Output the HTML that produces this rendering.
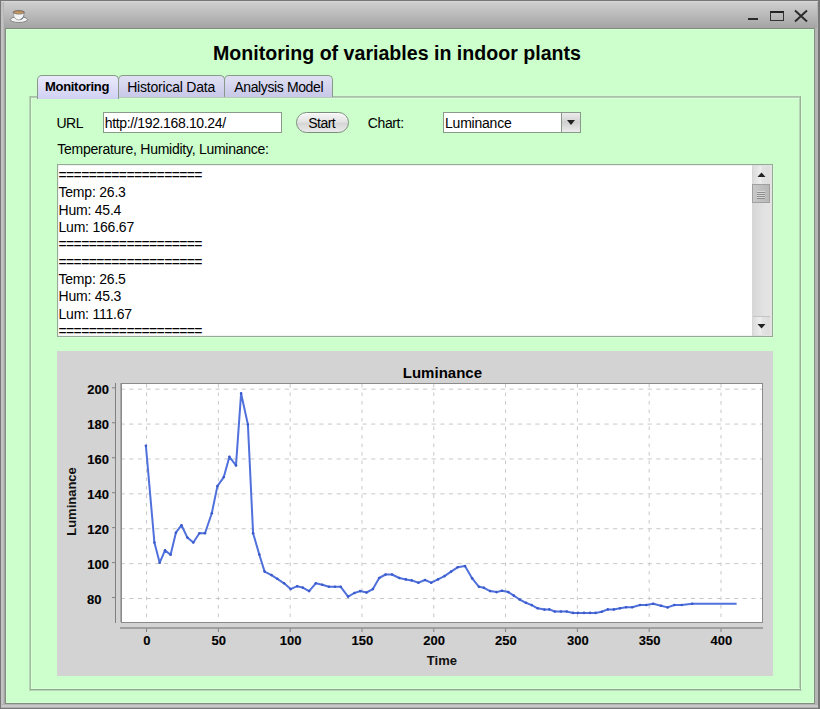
<!DOCTYPE html>
<html><head><meta charset="utf-8">
<style>
html,body{margin:0;padding:0;}
body{width:820px;height:709px;position:relative;overflow:hidden;background:#777;font-family:"Liberation Sans",sans-serif;}
.a{position:absolute;}
.t{position:absolute;white-space:pre;font-size:13.33px;color:#000;line-height:1;}
</style></head><body>
<!-- frame -->
<div class="a" style="left:1px;top:1px;width:818px;height:707px;background:#b4b4b4;"></div>
<div class="a" style="left:1px;top:1px;width:3px;height:707px;background:linear-gradient(90deg,#bdbdbd,#c8c8c8 40%,#b0b0b0);"></div>
<div class="a" style="left:4px;top:1px;width:1px;height:707px;background:#a5a5a5;"></div>
<div class="a" style="left:818px;top:1px;width:1px;height:707px;background:#777;"></div>
<div class="a" style="left:1px;top:704px;width:817px;height:4px;background:linear-gradient(180deg,#a8a8a8,#c8c8c8 30%,#c8c8c8 70%,#a0a0a0);"></div>
<!-- title bar -->
<div class="a" style="left:4px;top:1px;width:813px;height:27px;background:linear-gradient(180deg,#d6d6d6 0,#cdcdcd 2px,#a4a4a4 27px);"></div><div class="a" style="left:1px;top:1px;width:817px;height:1px;background:#d6d6d6;"></div>
<!-- coffee cup icon -->
<svg class="a" style="left:9px;top:9px" width="20" height="16" viewBox="0 0 20 16">
  <ellipse cx="9.9" cy="10.6" rx="8.6" ry="2.9" fill="#f2f2f2" stroke="#7a7a7a" stroke-width="0.9"/>
  <path d="M4.2 3.4 Q4.4 8.8 7.2 10.4 Q9.8 11.6 12.6 10.4 Q15.2 8.6 15.4 3.4 Z" fill="#f4f4f4" stroke="#8a8a8a" stroke-width="0.7"/>
  <path d="M10.5 10.6 Q13.5 9.8 14.6 6.8 L15.3 3.8 Q15.4 8.8 12.8 10.6 Z" fill="#6a7482"/>
  <ellipse cx="9.8" cy="3.3" rx="5.6" ry="1.8" fill="#a87e50" stroke="#666" stroke-width="0.7"/>
  <ellipse cx="9.8" cy="3.6" rx="4.4" ry="1.1" fill="#c29a6a"/>
</svg>
<!-- window buttons -->
<div class="a" style="left:748px;top:18px;width:10px;height:2px;background:#2a2a2a;"></div>
<div class="a" style="left:770px;top:11px;width:12px;height:7px;border:1.3px solid #333;border-top:2px solid #222;"></div>
<svg class="a" style="left:793px;top:9px" width="16" height="14" viewBox="0 0 16 14">
  <path d="M2 1.5 L14 12.5 M14 1.5 L2 12.5" stroke="#2a2a2a" stroke-width="1.9" fill="none"/>
</svg>
<!-- content -->
<div class="a" style="left:5px;top:28px;width:808px;height:674px;border:1px solid #7f907f;background:#ccffcc;box-shadow:inset 0 0 0 1px #d6fed6;"></div>

<div class="t" style="left:213px;top:43.5px;font-size:19.6px;font-weight:bold;">Monitoring of variables in indoor plants</div>

<!-- tab panel etched border -->
<div class="a" style="left:29px;top:95px;width:773px;height:1px;background:#d4fcd4;"></div>
<div class="a" style="left:29px;top:96px;width:773px;height:1px;background:#a8c4a8;"></div>
<div class="a" style="left:30px;top:97px;width:771px;height:1px;background:#b4ccb4;"></div>
<div class="a" style="left:31px;top:98px;width:769px;height:1px;background:#d8ffd8;"></div>
<div class="a" style="left:29px;top:96px;width:1px;height:595px;background:#b8d4b8;"></div>
<div class="a" style="left:30px;top:96px;width:1px;height:594px;background:#9cc09c;"></div>
<div class="a" style="left:31px;top:98px;width:1px;height:591px;background:#d8ffd8;"></div>
<div class="a" style="left:799px;top:97px;width:1px;height:593px;background:#b8d4b8;"></div>
<div class="a" style="left:800px;top:96px;width:1px;height:594px;background:#94b494;"></div>
<div class="a" style="left:801px;top:96px;width:1px;height:595px;background:#d8ffd8;"></div>
<div class="a" style="left:31px;top:688px;width:769px;height:1px;background:#d8ffd8;"></div>
<div class="a" style="left:30px;top:689px;width:771px;height:1px;background:#8cac8c;"></div>
<div class="a" style="left:29px;top:690px;width:773px;height:1px;background:#b8d4b8;"></div>
<!-- tabs -->
<div class="a" style="left:118px;top:75px;width:105px;height:21px;border:1px solid #8a9a8a;border-bottom:none;border-radius:5px 5px 0 0;background:linear-gradient(180deg,#e0e0f4,#c8c8e8);"></div>
<div class="a" style="left:224px;top:75px;width:107px;height:21px;border:1px solid #8a9a8a;border-bottom:none;border-radius:5px 5px 0 0;background:linear-gradient(180deg,#e0e0f4,#c8c8e8);"></div>
<div class="a" style="left:37px;top:75px;width:80px;height:23px;border:1px solid #8a9a8a;border-bottom:none;border-radius:5px 5px 0 0;background:linear-gradient(180deg,#eaeafc,#d0d0f4);"></div>
<div class="t" style="left:45px;top:80px;font-size:13px;font-weight:bold;letter-spacing:-0.3px;">Monitoring</div>
<div class="t" style="left:127.2px;top:80px;font-size:14px;letter-spacing:-0.21px;">Historical Data</div>
<div class="t" style="left:234.3px;top:80px;font-size:14px;letter-spacing:-0.38px;">Analysis Model</div>

<!-- row 1 -->
<div class="t" style="left:56.5px;top:116px;font-size:14px;letter-spacing:-0.5px;">URL</div>
<div class="a" style="left:103px;top:112px;width:177px;height:19px;border:1px solid #8a9a8a;background:#fff;"></div>
<div class="t" style="left:104.8px;top:116px;font-size:14px;letter-spacing:-0.36px;">http://192.168.10.24/</div>
<div class="a" style="left:296px;top:112px;width:51px;height:19px;border:1px solid #7c8c7c;border-radius:11px;background:linear-gradient(180deg,#f6f6f6,#e4e4e4 45%,#d6d6d6 55%,#eaeaea);box-shadow:inset 0 1px 0 #fff;"></div>
<div class="t" style="left:308.2px;top:116px;font-size:14px;letter-spacing:-0.5px;">Start</div>
<div class="t" style="left:367.8px;top:116px;font-size:14px;letter-spacing:-0.38px;">Chart:</div>
<div class="a" style="left:443px;top:112px;width:136px;height:19px;border:1px solid #8a9a8a;background:#fff;"></div>
<div class="a" style="left:561px;top:113px;width:18px;height:19px;border-left:1px solid #8a9a8a;background:linear-gradient(180deg,#ececec,#d0d0d0 50%,#ececec);"></div>
<svg class="a" style="left:566px;top:119px" width="10" height="7"><path d="M1 1 L9 1 L5 6 Z" fill="#222"/></svg>
<div class="t" style="left:445px;top:116px;font-size:14px;letter-spacing:-0.22px;">Luminance</div>

<div class="t" style="left:57.3px;top:142px;font-size:14px;letter-spacing:-0.26px;">Temperature, Humidity, Luminance:</div>

<!-- text area -->
<div class="a" style="left:57px;top:164px;width:714px;height:171px;border:1px solid #94aa94;background:#fff;box-shadow:inset 0 0 2px rgba(0,0,0,.18), 1px 1px 0 #d8ffd8;"></div>
<div class="t" style="left:58.5px;top:167px;line-height:17.33px;font-size:14px;letter-spacing:-0.21px;"><span style="letter-spacing:-0.63px">===================</span>
Temp: 26.3
Hum: 45.4
Lum: 166.67
<span style="letter-spacing:-0.63px">===================</span>
<span style="letter-spacing:-0.63px">===================</span>
Temp: 26.5
Hum: 45.3
Lum: 111.67
<span style="letter-spacing:-0.63px">===================</span></div>
<!-- scrollbar -->
<div class="a" style="left:752px;top:165px;width:20px;height:171px;background:linear-gradient(90deg,#d6d6d6,#e2e2e2 60%,#e4e4e4);"></div>
<div class="a" style="left:753px;top:166px;width:17px;height:18px;background:linear-gradient(90deg,#dcdcdc,#ededed 45%,#e2e2e2 55%,#dddddd);"></div>
<svg class="a" style="left:756px;top:170.5px" width="11" height="7"><path d="M1.5 6 L9.5 6 L5.5 1.5 Z" fill="#222"/></svg>
<div class="a" style="left:752px;top:184px;width:16px;height:17px;border:1px solid #a0a0a0;background:linear-gradient(90deg,#c8c8c8,#b8b8b8);"></div>
<div class="a" style="left:757px;top:191px;width:8px;height:1px;background:#d8d8d8;box-shadow:0 1px 0 #8c8c8c,0 2px 0 #d8d8d8,0 3px 0 #8c8c8c,0 4px 0 #d8d8d8,0 5px 0 #8c8c8c,0 6px 0 #d8d8d8,0 7px 0 #8c8c8c;"></div>
<div class="a" style="left:753px;top:316px;width:17px;height:18px;border-top:1px solid #c4c4c4;background:linear-gradient(90deg,#dcdcdc,#ededed 45%,#e2e2e2 55%,#dddddd);"></div>
<svg class="a" style="left:756px;top:323px" width="11" height="7"><path d="M1.5 1 L9.5 1 L5.5 5.5 Z" fill="#222"/></svg>

<!-- chart -->
<div class="a" style="left:57px;top:351px;width:716px;height:325px;background:#d3d3d3;"></div>
<svg class="a" style="left:0;top:0" width="820" height="709" viewBox="0 0 820 709">
  <rect x="121.5" y="383.5" width="641" height="239" fill="#fff" stroke="#8a8a8a" stroke-width="1"/>
  <rect x="120" y="383" width="1" height="239" fill="#a8a8a8"/>
  <g stroke="#c8c8c8" stroke-width="1">
<line x1="146.55" y1="384" x2="146.55" y2="622" stroke-dasharray="3.6 4.9" />
<line x1="218.36" y1="384" x2="218.36" y2="622" stroke-dasharray="3.6 4.9" />
<line x1="290.16" y1="384" x2="290.16" y2="622" stroke-dasharray="3.6 4.9" />
<line x1="361.97" y1="384" x2="361.97" y2="622" stroke-dasharray="3.6 4.9" />
<line x1="433.77" y1="384" x2="433.77" y2="622" stroke-dasharray="3.6 4.9" />
<line x1="505.57" y1="384" x2="505.57" y2="622" stroke-dasharray="3.6 4.9" />
<line x1="577.38" y1="384" x2="577.38" y2="622" stroke-dasharray="3.6 4.9" />
<line x1="649.18" y1="384" x2="649.18" y2="622" stroke-dasharray="3.6 4.9" />
<line x1="720.99" y1="384" x2="720.99" y2="622" stroke-dasharray="3.6 4.9" />
<line x1="122" y1="598.52" x2="762" y2="598.52" stroke-dasharray="4.2 4.44" stroke-dashoffset="1.4" />
<line x1="122" y1="563.63" x2="762" y2="563.63" stroke-dasharray="4.2 4.44" stroke-dashoffset="1.4" />
<line x1="122" y1="528.74" x2="762" y2="528.74" stroke-dasharray="4.2 4.44" stroke-dashoffset="1.4" />
<line x1="122" y1="493.85" x2="762" y2="493.85" stroke-dasharray="4.2 4.44" stroke-dashoffset="1.4" />
<line x1="122" y1="458.96" x2="762" y2="458.96" stroke-dasharray="4.2 4.44" stroke-dashoffset="1.4" />
<line x1="122" y1="424.07" x2="762" y2="424.07" stroke-dasharray="4.2 4.44" stroke-dashoffset="1.4" />
<line x1="122" y1="389.18" x2="762" y2="389.18" stroke-dasharray="4.2 4.44" stroke-dashoffset="1.4" />
  </g>
  <rect x="115" y="383" width="1" height="240" fill="#808080"/>
  <rect x="120" y="627" width="643" height="2" fill="#a0a0a0"/>
  <g stroke="#808080" stroke-width="1">
<line x1="146.55" y1="628.5" x2="146.55" y2="632" /><line x1="218.36" y1="628.5" x2="218.36" y2="632" /><line x1="290.16" y1="628.5" x2="290.16" y2="632" /><line x1="361.97" y1="628.5" x2="361.97" y2="632" /><line x1="433.77" y1="628.5" x2="433.77" y2="632" /><line x1="505.57" y1="628.5" x2="505.57" y2="632" /><line x1="577.38" y1="628.5" x2="577.38" y2="632" /><line x1="649.18" y1="628.5" x2="649.18" y2="632" /><line x1="720.99" y1="628.5" x2="720.99" y2="632" />
<line x1="112" y1="597.56" x2="115" y2="597.56" /><line x1="112" y1="562.6" x2="115" y2="562.6" /><line x1="112" y1="527.64" x2="115" y2="527.64" /><line x1="112" y1="492.68" x2="115" y2="492.68" /><line x1="112" y1="457.72" x2="115" y2="457.72" /><line x1="112" y1="422.76" x2="115" y2="422.76" /><line x1="112" y1="387.8" x2="115" y2="387.8" />
  </g>
  <polyline points="145.9,445.8 154.4,542.5 159.7,562.7 165.0,550.4 170.6,554.8 175.9,532.7 181.5,525.2 187.4,537.6 193.3,542.5 199.4,533.3 205.0,533.3 211.8,513.2 217.4,486.1 223.8,477.1 229.4,456.8 236.0,465.4 241.1,393.4 247.9,424.5 253.1,533.3 259.3,554.5 264.6,571.6 271.5,575.1 277.3,578.8 284.1,583.3 290.6,589.1 297.2,586.2 302.7,587.6 309.1,591.1 315.8,583.3 322.2,584.7 329.0,586.8 334.9,586.8 340.7,586.8 348.1,596.6 354.4,593.0 360.2,591.1 366.5,592.5 372.9,589.1 379.2,578.0 385.6,574.5 392.0,574.5 399.3,578.0 405.9,579.4 411.7,580.4 418.5,582.7 425.0,580.0 431.2,582.7 438.0,579.4 444.5,576.1 451.1,571.6 457.6,567.3 465.0,566.1 472.2,578.4 479.0,586.8 483.9,587.8 490.1,591.1 496.6,592.1 501.9,590.7 508.3,592.1 513.8,595.6 519.6,599.5 525.9,602.8 531.7,605.1 537.6,608.3 544.4,609.6 549.3,609.4 554.8,611.5 560.9,611.5 566.7,611.5 573.0,612.9 577.9,612.9 584.0,612.9 590.1,612.9 595.6,612.9 601.7,611.8 607.8,609.4 613.9,609.4 620.0,608.2 626.1,607.2 632.2,607.2 640.1,605.0 646.3,605.0 653.2,603.8 661.0,605.7 667.6,607.4 674.4,605.0 681.7,605.0 692.2,603.8 736.6,603.8" fill="none" stroke="#5070dc" stroke-width="2" stroke-linejoin="round"/>
  <g fill="#3a5acc"><circle cx="145.9" cy="445.8" r="1.3"/><circle cx="154.4" cy="542.5" r="1.3"/><circle cx="159.7" cy="562.7" r="1.3"/><circle cx="165.0" cy="550.4" r="1.3"/><circle cx="170.6" cy="554.8" r="1.3"/><circle cx="175.9" cy="532.7" r="1.3"/><circle cx="181.5" cy="525.2" r="1.3"/><circle cx="187.4" cy="537.6" r="1.3"/><circle cx="193.3" cy="542.5" r="1.3"/><circle cx="199.4" cy="533.3" r="1.3"/><circle cx="205.0" cy="533.3" r="1.3"/><circle cx="211.8" cy="513.2" r="1.3"/><circle cx="217.4" cy="486.1" r="1.3"/><circle cx="223.8" cy="477.1" r="1.3"/><circle cx="229.4" cy="456.8" r="1.3"/><circle cx="236.0" cy="465.4" r="1.3"/><circle cx="241.1" cy="393.4" r="1.3"/><circle cx="247.9" cy="424.5" r="1.3"/><circle cx="253.1" cy="533.3" r="1.3"/><circle cx="259.3" cy="554.5" r="1.3"/><circle cx="264.6" cy="571.6" r="1.3"/><circle cx="271.5" cy="575.1" r="1.3"/><circle cx="277.3" cy="578.8" r="1.3"/><circle cx="284.1" cy="583.3" r="1.3"/><circle cx="290.6" cy="589.1" r="1.3"/><circle cx="297.2" cy="586.2" r="1.3"/><circle cx="302.7" cy="587.6" r="1.3"/><circle cx="309.1" cy="591.1" r="1.3"/><circle cx="315.8" cy="583.3" r="1.3"/><circle cx="322.2" cy="584.7" r="1.3"/><circle cx="329.0" cy="586.8" r="1.3"/><circle cx="334.9" cy="586.8" r="1.3"/><circle cx="340.7" cy="586.8" r="1.3"/><circle cx="348.1" cy="596.6" r="1.3"/><circle cx="354.4" cy="593.0" r="1.3"/><circle cx="360.2" cy="591.1" r="1.3"/><circle cx="366.5" cy="592.5" r="1.3"/><circle cx="372.9" cy="589.1" r="1.3"/><circle cx="379.2" cy="578.0" r="1.3"/><circle cx="385.6" cy="574.5" r="1.3"/><circle cx="392.0" cy="574.5" r="1.3"/><circle cx="399.3" cy="578.0" r="1.3"/><circle cx="405.9" cy="579.4" r="1.3"/><circle cx="411.7" cy="580.4" r="1.3"/><circle cx="418.5" cy="582.7" r="1.3"/><circle cx="425.0" cy="580.0" r="1.3"/><circle cx="431.2" cy="582.7" r="1.3"/><circle cx="438.0" cy="579.4" r="1.3"/><circle cx="444.5" cy="576.1" r="1.3"/><circle cx="451.1" cy="571.6" r="1.3"/><circle cx="457.6" cy="567.3" r="1.3"/><circle cx="465.0" cy="566.1" r="1.3"/><circle cx="472.2" cy="578.4" r="1.3"/><circle cx="479.0" cy="586.8" r="1.3"/><circle cx="483.9" cy="587.8" r="1.3"/><circle cx="490.1" cy="591.1" r="1.3"/><circle cx="496.6" cy="592.1" r="1.3"/><circle cx="501.9" cy="590.7" r="1.3"/><circle cx="508.3" cy="592.1" r="1.3"/><circle cx="513.8" cy="595.6" r="1.3"/><circle cx="519.6" cy="599.5" r="1.3"/><circle cx="525.9" cy="602.8" r="1.3"/><circle cx="531.7" cy="605.1" r="1.3"/><circle cx="537.6" cy="608.3" r="1.3"/><circle cx="544.4" cy="609.6" r="1.3"/><circle cx="549.3" cy="609.4" r="1.3"/><circle cx="554.8" cy="611.5" r="1.3"/><circle cx="560.9" cy="611.5" r="1.3"/><circle cx="566.7" cy="611.5" r="1.3"/><circle cx="573.0" cy="612.9" r="1.3"/><circle cx="577.9" cy="612.9" r="1.3"/><circle cx="584.0" cy="612.9" r="1.3"/><circle cx="590.1" cy="612.9" r="1.3"/><circle cx="595.6" cy="612.9" r="1.3"/><circle cx="601.7" cy="611.8" r="1.3"/><circle cx="607.8" cy="609.4" r="1.3"/><circle cx="613.9" cy="609.4" r="1.3"/><circle cx="620.0" cy="608.2" r="1.3"/><circle cx="626.1" cy="607.2" r="1.3"/><circle cx="632.2" cy="607.2" r="1.3"/><circle cx="640.1" cy="605.0" r="1.3"/><circle cx="646.3" cy="605.0" r="1.3"/><circle cx="653.2" cy="603.8" r="1.3"/><circle cx="661.0" cy="605.7" r="1.3"/><circle cx="667.6" cy="607.4" r="1.3"/><circle cx="674.4" cy="605.0" r="1.3"/><circle cx="681.7" cy="605.0" r="1.3"/><circle cx="692.2" cy="603.8" r="1.3"/></g>
  <g font-family="Liberation Sans" font-weight="bold" font-size="13" fill="#000" stroke="#000" stroke-width="0.12" text-anchor="middle">
<text x="146.95" y="645">0</text><text x="218.76" y="645">50</text><text x="290.56" y="645">100</text><text x="362.37" y="645">150</text><text x="434.17" y="645">200</text><text x="505.97" y="645">250</text><text x="577.78" y="645">300</text><text x="649.58" y="645">350</text><text x="721.39" y="645">400</text>
  </g>
  <g font-family="Liberation Sans" font-weight="bold" font-size="13" fill="#000" stroke="#000" stroke-width="0.12" text-anchor="end">
<text x="87" y="603.56" text-anchor="start">80</text><text x="109" y="568.6" text-anchor="end">100</text><text x="109" y="533.64" text-anchor="end">120</text><text x="109" y="498.68" text-anchor="end">140</text><text x="109" y="463.72" text-anchor="end">160</text><text x="109" y="428.76" text-anchor="end">180</text><text x="109" y="393.8" text-anchor="end">200</text>
  </g>
  <text x="442.4" y="378" font-family="Liberation Sans" font-weight="bold" font-size="15" fill="#000" text-anchor="middle">Luminance</text>
  <text x="441.9" y="665" font-family="Liberation Sans" font-weight="bold" font-size="13" fill="#111" text-anchor="middle">Time</text>
  <text transform="translate(75.8,501.5) rotate(-90)" font-family="Liberation Sans" font-weight="bold" font-size="13" fill="#111" text-anchor="middle">Luminance</text>
</svg>
</body></html>
